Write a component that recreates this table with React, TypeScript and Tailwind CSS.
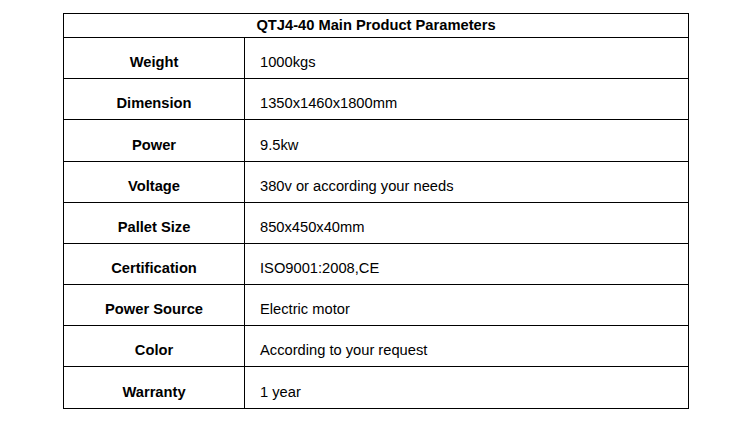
const rows: { label: string; value: string; tall?: boolean }[] = [
  { label: "Weight", value: "1000kgs" },
  { label: "Dimension", value: "1350x1460x1800mm" },
  { label: "Power", value: "9.5kw", tall: true },
  { label: "Voltage", value: "380v or according your needs" },
  { label: "Pallet Size", value: "850x450x40mm" },
  { label: "Certification", value: "ISO9001:2008,CE" },
  { label: "Power Source", value: "Electric motor" },
  { label: "Color", value: "According to your request" },
  { label: "Warranty", value: "1 year" },
];

export default function App() {
  return (
    <div
      className="w-[750px] h-[430px] bg-white pt-[13px] pl-[63px] text-black"
      style={{ fontFamily: '"Liberation Sans", Arial, sans-serif' }}
    >
      <div className="w-[626px] border border-black text-[14.7px]">
        <div className="h-[24px] flex items-center justify-center border-b border-black font-bold pb-[1px]">
          QTJ4-40 Main Product Parameters
        </div>
        {rows.map((r, i) => (
          <div
            key={r.label}
            className={`flex ${r.tall ? "h-[42px]" : "h-[41px]"} ${
              i < rows.length - 1 ? "border-b border-black" : ""
            }`}
          >
            <div className="w-[181px] shrink-0 border-r border-black flex items-center justify-center font-bold pt-[9px]">
              {r.label}
            </div>
            <div className="flex-1 flex items-center pl-[15px] pt-[9px]">{r.value}</div>
          </div>
        ))}
      </div>
    </div>
  );
}
